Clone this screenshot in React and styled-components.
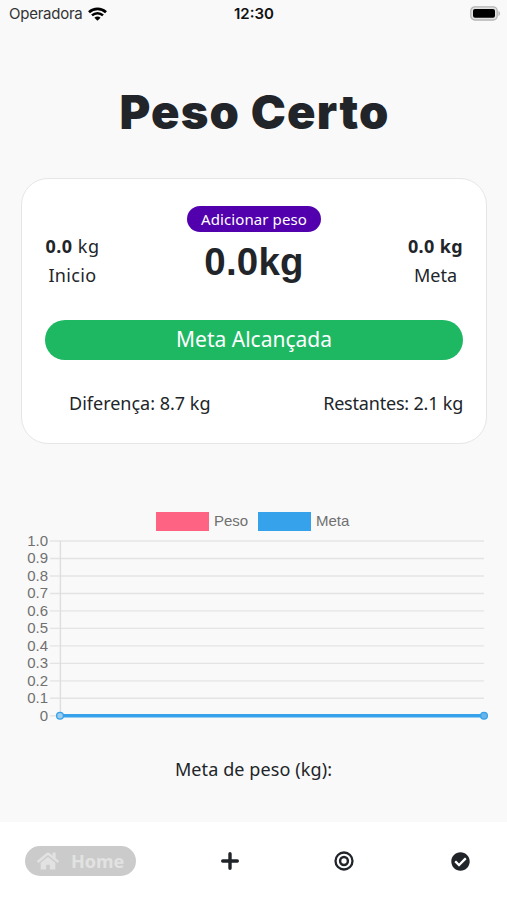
import React from 'react';
import styled, { createGlobalStyle } from 'styled-components';
import { FaHome, FaCheckCircle } from 'react-icons/fa';

const ticks = ['1.0', '0.9', '0.8', '0.7', '0.6', '0.5', '0.4', '0.3', '0.2', '0.1', '0'];

const Chart = () => (
  <ChartSvg width="507" height="198" viewBox="0 0 507 198">
    {ticks.map((tick, i) => {
      const y = 9 + i * 17.48;
      return (
        <g key={tick}>
          <line x1="50" x2="484" y1={y} y2={y} stroke="#e4e4e4" strokeWidth="1.4" />
          <text x="48" y={y + 5} textAnchor="end">{tick}</text>
        </g>
      );
    })}
    <line x1="60.4" x2="60.4" y1="9" y2="184" stroke="#dedede" strokeWidth="1.4" />
    <line x1="60" x2="484" y1="183.8" y2="183.8" stroke="#36a2eb" strokeWidth="3.6" />
    <circle cx="60" cy="183.8" r="3.4" fill="#9ccbed" stroke="#36a2eb" strokeWidth="1.3" />
    <circle cx="484" cy="183.8" r="3.4" fill="#68b3e8" stroke="#36a2eb" strokeWidth="1.3" />
  </ChartSvg>
);

function App() {
  return (
    <Screen>
      <GlobalStyle />
      <StatusBar>
        <Carrier>
          <span>Operadora</span>
          <svg width="19" height="14" viewBox="0 0 19 14" fill="none" stroke="#000">
            <path d="M1 5.2C5.8.7 13.2.7 18 5.2" strokeWidth="2.7" />
            <path d="M4 8.4C7.1 5.4 11.9 5.4 15 8.4" strokeWidth="2.5" />
            <path d="M6.4 10.7C8.2 9.1 10.8 9.1 12.6 10.7L9.5 13.8Z" fill="#000" stroke="none" />
          </svg>
        </Carrier>
        <Time>12:30</Time>
        <Battery>
          <svg width="31" height="15" viewBox="0 0 31 15">
            <rect x="0.8" y="0.8" width="26.4" height="13.2" rx="4" fill="#e2e2e2" stroke="#b5b5b5" strokeWidth="1.3" />
            <rect x="3" y="3" width="22" height="8.8" rx="2" fill="#000" />
            <path d="M28.5 5v5c1.8-.6 1.8-4.4 0-5z" fill="#aaa" />
          </svg>
        </Battery>
      </StatusBar>

      <Title>Peso Certo</Title>

      <Card>
        <Summary>
          <Stat>
            <Value $spacing="0.5px"><b>0.0</b> kg</Value>
            <Label $spacing="0.35px">Inicio</Label>
          </Stat>
          <Current>
            <AddButton>Adicionar peso</AddButton>
            <Weight>0.0kg</Weight>
          </Current>
          <Stat>
            <Value $spacing="0.4px"><b>0.0 kg</b></Value>
            <Label>Meta</Label>
          </Stat>
        </Summary>
        <Goal>Meta Alcançada</Goal>
        <Totals>
          <Label>Diferença: 8.7 kg</Label>
          <Label $spacing="-0.2px">Restantes: 2.1 kg</Label>
        </Totals>
      </Card>

      <Legend>
        <Swatch $color="#ff6384" />
        <LegendText>Peso</LegendText>
        <Swatch $color="#36a2eb" />
        <LegendText>Meta</LegendText>
      </Legend>
      <Chart />

      <Question>Meta de peso (kg):</Question>

      <Nav>
        <HomeTab>
          <FaHome size={22} />
          <span>Home</span>
        </HomeTab>
        <Tab>
          <svg width="20" height="20" viewBox="0 0 20 20" stroke="#212529" strokeWidth="3.4" strokeLinecap="round">
            <path d="M10 2.7v14.6M2.7 10h14.6" />
          </svg>
        </Tab>
        <Tab>
          <svg width="20" height="20" viewBox="0 0 20 20" fill="none" stroke="#212529">
            <circle cx="10" cy="10" r="8.5" strokeWidth="2.3" />
            <circle cx="10" cy="10" r="3.9" strokeWidth="2.5" />
          </svg>
        </Tab>
        <Tab>
          <FaCheckCircle size={19} />
        </Tab>
      </Nav>
    </Screen>
  );
}

const GlobalStyle = createGlobalStyle`
  * {
    box-sizing: border-box;
  }
  body {
    margin: 0;
    background: #f9f9f9;
    color: #212529;
    font-family: 'Noto Sans', sans-serif;
  }
`;

const Screen = styled.div`
  display: flex;
  flex-direction: column;
  width: 507px;
  height: 900px;
  overflow: hidden;
`;

const StatusBar = styled.header`
  display: grid;
  grid-template-columns: 1fr auto 1fr;
  align-items: center;
  height: 27px;
  padding: 0 6px 0 9px;
  font-family: Inter, sans-serif;
  font-size: 15px;
  color: #111;
`;

const Carrier = styled.div`
  display: flex;
  align-items: center;
  gap: 6px;
  letter-spacing: -0.25px;
  color: #333;
`;

const Time = styled.div`
  padding-right: 2px;
  font-weight: 600;
`;

const Battery = styled.div`
  display: flex;
  justify-content: flex-end;
`;

const Title = styled.h1`
  margin: 57px 0 0;
  height: 56px;
  line-height: 56px;
  padding-left: 2px;
  text-align: center;
  font-family: Inter, sans-serif;
  font-size: 47px;
  font-weight: 900;
  letter-spacing: 1.2px;
`;

const Card = styled.section`
  display: flex;
  flex-direction: column;
  margin: 38px 20px 0 21px;
  height: 266px;
  padding: 27px 23px 0;
  background: #fff;
  border: 1.5px solid #e6e6e6;
  border-radius: 27px;
`;

const Summary = styled.div`
  display: flex;
  justify-content: space-between;
  height: 114px;
`;

const Stat = styled.div`
  display: flex;
  flex-direction: column;
  align-items: center;
  width: 55px;
  padding-top: 26px;
`;

const Value = styled.div`
  height: 28px;
  line-height: 29px;
  font-size: 18px;
  white-space: nowrap;
  letter-spacing: ${(props) => props.$spacing || '0'};
`;

const Label = styled.div`
  height: 30px;
  line-height: 30px;
  font-size: 18px;
  white-space: nowrap;
  letter-spacing: ${(props) => props.$spacing || '0'};
`;

const Current = styled.div`
  display: flex;
  flex-direction: column;
  align-items: center;
`;

const AddButton = styled.button`
  width: 134px;
  height: 26px;
  padding: 0;
  border: none;
  border-radius: 13px;
  background: #5200ae;
  color: #fff;
  font-family: inherit;
  font-size: 15px;
  line-height: 25px;
  letter-spacing: 0.1px;
`;

const Weight = styled.strong`
  height: 58px;
  line-height: 60px;
  font-family: 'Liberation Sans', Arial, sans-serif;
  font-size: 38.5px;
  letter-spacing: 0.2px;
`;

const Goal = styled.div`
  height: 40px;
  line-height: 39px;
  border-radius: 20px;
  background: #1eb863;
  color: #fff;
  text-align: center;
  font-size: 21px;
`;

const Totals = styled.div`
  display: flex;
  justify-content: space-between;
  padding: 28px 0 0 24px;
`;

const Legend = styled.div`
  display: flex;
  align-items: center;
  height: 20px;
  margin: 67px 0 0 156px;
`;

const Swatch = styled.span`
  width: 53px;
  height: 19px;
  background: ${(props) => props.$color};
`;

const LegendText = styled.span`
  width: 49px;
  padding: 0 0 1px 5px;
  color: #707070;
  font-family: 'Liberation Sans', Arial, sans-serif;
  font-size: 15px;
`;

const ChartSvg = styled.svg`
  display: block;
  margin-top: 1px;

  text {
    fill: #707070;
    font-family: 'Liberation Sans', Arial, sans-serif;
    font-size: 15px;
  }
`;

const Question = styled.p`
  margin: 24px 0 0;
  height: 30px;
  line-height: 30px;
  text-align: center;
  font-size: 18px;
  letter-spacing: 0.1px;
`;

const Nav = styled.nav`
  display: grid;
  grid-template-columns: 147px 115px 114px 118px;
  align-items: center;
  margin-top: auto;
  height: 78px;
  padding-left: 25px;
  background: #fff;
`;

const HomeTab = styled.button`
  display: flex;
  align-items: center;
  gap: 12px;
  width: 111px;
  height: 30px;
  padding: 0 0 0 12px;
  border: none;
  border-radius: 15px;
  background: #cbcbcb;
  color: #e2e2e2;
  font-family: inherit;
  font-size: 18px;
  font-weight: 700;
`;

const Tab = styled.div`
  display: flex;
  justify-content: center;
`;

export default App;
